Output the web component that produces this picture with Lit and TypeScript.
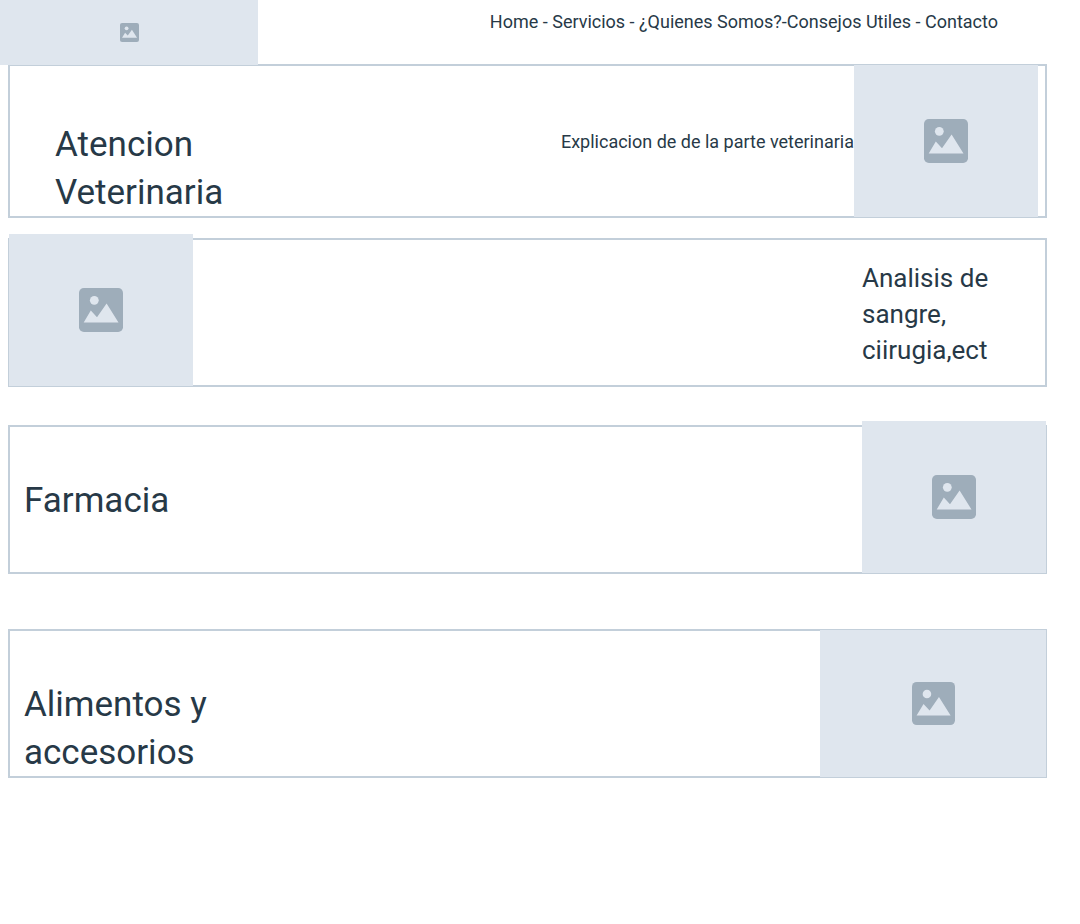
import { LitElement, html, css } from "lit";
import { customElement } from "lit/decorators.js";

@customElement("image-placeholder")
export class ImagePlaceholder extends LitElement {
  static styles = css`
    :host {
      display: flex;
      align-items: center;
      justify-content: center;
      background: #dfe6ee;
    }
    .icon {
      display: block;
      width: var(--icon-size, 44px);
      height: var(--icon-size, 44px);
    }
    .frame {
      fill: #9eadba;
    }
    .scene {
      fill: #dfe6ee;
    }
  `;

  render() {
    return html`
      <svg class="icon" viewBox="0 0 44 44" aria-hidden="true">
        <rect class="frame" width="44" height="44" rx="4.8" />
        <circle class="scene" cx="15.3" cy="12.3" r="4.4" />
        <path class="scene" d="M4.7 34.4 L11.8 22.4 L18 29.2 L27.6 15.4 L39.5 34.4 Z" />
      </svg>
    `;
  }
}

@customElement("app-root")
export class AppRoot extends LitElement {
  static styles = css`
    :host {
      display: block;
      background: #ffffff;
      color: #273947;
      font-family: Roboto, "Liberation Sans", sans-serif;
      font-size: 18px;
      line-height: 24px;
    }
    .header {
      display: flex;
      justify-content: space-between;
      align-items: flex-start;
    }
    .logo {
      width: 258px;
      height: 65px;
      --icon-size: 19px;
    }
    .nav {
      padding: 10px 82px 0 0;
    }
    .nav a {
      color: inherit;
      text-decoration: none;
    }
    .sections {
      margin: -1px 33px 0 8px;
    }
    .card {
      display: flex;
      align-items: center;
      box-sizing: border-box;
      min-height: 149px;
      border: 2px solid #c3cfda;
    }
    .card.care {
      min-height: 154px;
      margin-bottom: 20px;
      padding-right: 7px;
    }
    .card.analysis {
      margin-bottom: 38px;
    }
    .card.pharmacy {
      margin-bottom: 55px;
    }
    .title {
      max-width: 200px;
      margin: 0 auto 0 14px;
      padding-top: 2px;
      font-size: 35px;
      line-height: 48px;
      font-weight: 400;
    }
    .title.low {
      align-self: flex-end;
      margin-bottom: -1px;
    }
    .care .title {
      margin-left: 45px;
    }
    .subtitle {
      width: 160px;
      margin: 0 23px 0 auto;
      padding-top: 2px;
      font-size: 26px;
      line-height: 36px;
      font-weight: 400;
    }
    .text {
      margin: 0;
      padding-top: 2px;
    }
    .picture {
      align-self: stretch;
      width: 184px;
      margin: -1px;
    }
    .picture.raised {
      margin-top: -6px;
    }
    .care .picture {
      margin: -1px 0;
    }
    .picture.wide {
      width: 226px;
      --icon-size: 43px;
    }
  `;

  render() {
    return html`
      <header class="header">
        <image-placeholder class="logo" role="img" aria-label="Logo"></image-placeholder>
        <nav class="nav">
          <a href="#home">Home</a> - <a href="#servicios">Servicios</a> -
          <a href="#quienes">¿Quienes Somos?</a>-<a href="#consejos">Consejos Utiles</a> -
          <a href="#contacto">Contacto</a>
        </nav>
      </header>
      <main class="sections">
        <section class="card care">
          <h2 class="title low">Atencion Veterinaria</h2>
          <p class="text">Explicacion de de la parte veterinaria</p>
          <image-placeholder class="picture"></image-placeholder>
        </section>
        <section class="card analysis">
          <image-placeholder class="picture raised"></image-placeholder>
          <h3 class="subtitle">Analisis de sangre, ciirugia,ect</h3>
        </section>
        <section class="card pharmacy">
          <h2 class="title">Farmacia</h2>
          <image-placeholder class="picture raised"></image-placeholder>
        </section>
        <section class="card food">
          <h2 class="title low">Alimentos y accesorios</h2>
          <image-placeholder class="picture wide"></image-placeholder>
        </section>
      </main>
    `;
  }
}
